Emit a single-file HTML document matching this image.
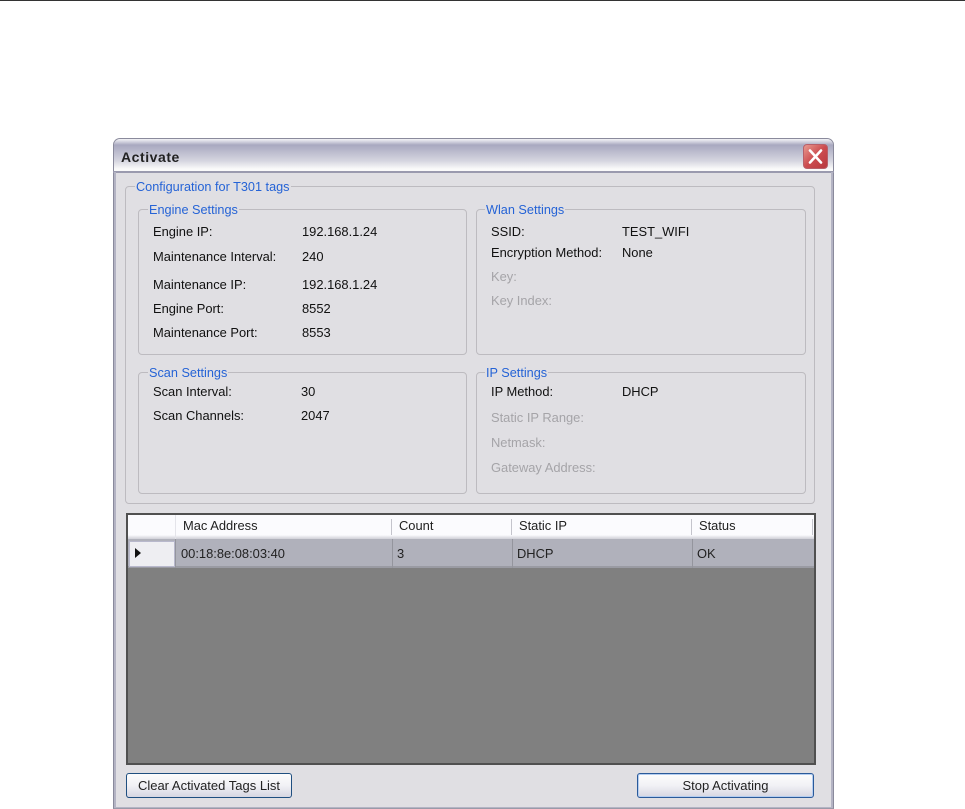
<!DOCTYPE html>
<html>
<head>
<meta charset="utf-8">
<style>
html,body{margin:0;padding:0;background:#fff;}
body{width:965px;height:809px;position:relative;overflow:hidden;font-family:"Liberation Sans",sans-serif;font-size:12.9px;color:#111;}
div,span{position:absolute;box-sizing:border-box;}
.t{white-space:nowrap;line-height:14px;height:14px;filter:blur(.3px);}
.d{color:#a5a4a8;}
.l{color:#2563d6;background:#e0dfe3;padding:0 1px;font-size:12.7px;}
.g{border:1px solid #bdbbc0;border-radius:4px;}
.btn{border:1px solid #1f4f80;border-radius:3px;background:linear-gradient(#fdfdfd,#f1f1f5 50%,#d6d6e2);text-align:center;line-height:24px;font-size:13px;color:#222;}
</style>
</head>
<body>
<div style="left:0;top:0;width:965px;height:1px;background:#333;"></div>

<!-- window -->
<div style="left:113px;top:138px;width:721px;height:671px;background:#e0dfe3;border:1px solid #8a8a9c;border-bottom-color:#9a9aa8;border-radius:7px 7px 0 0;"></div>
<div style="left:114px;top:139px;width:719px;height:33px;border-radius:6px 6px 0 0;background:linear-gradient(#f2f2f6 0,#dcdce6 2px,#a9a9c0 6px,#b4b4c8 10px,#d6d6e0 22px,#fafafa 30px);"></div>
<div style="left:113px;top:171px;width:721px;height:2px;background:#9a9aae;"></div>
<div style="left:114px;top:172px;width:2px;height:636px;background:#b4b4c4;"></div>
<div style="left:831px;top:172px;width:2px;height:636px;background:#b4b4c4;"></div>
<div style="left:114px;top:807px;width:719px;height:1px;background:#b4b4c4;"></div>
<div class="t" style="left:121px;top:150px;font-weight:bold;font-size:14px;color:#222;letter-spacing:.55px;">Activate</div>
<!-- close -->
<div style="left:803px;top:144px;width:25px;height:25px;border-radius:4px;border:1px solid #b8606a;background:linear-gradient(135deg,#e89a90,#cc4c50 50%,#b8383e);"></div>
<svg style="position:absolute;left:803px;top:144px;" width="25" height="25"><path d="M7 6.5L18 18.5M18 6.5L7 18.5" stroke="#fff" stroke-width="2.6" stroke-linecap="round"/></svg>

<!-- group boxes -->
<div class="g" style="left:125px;top:186px;width:690px;height:318px;"></div>
<div class="g" style="left:138px;top:209px;width:329px;height:146px;"></div>
<div class="g" style="left:476px;top:209px;width:330px;height:146px;"></div>
<div class="g" style="left:138px;top:372px;width:329px;height:122px;"></div>
<div class="g" style="left:476px;top:372px;width:330px;height:122px;"></div>

<div class="t l" style="left:135px;top:180px;">Configuration for T301 tags</div>
<div class="t l" style="left:148px;top:203px;">Engine Settings</div>
<div class="t l" style="left:485px;top:203px;">Wlan Settings</div>
<div class="t l" style="left:148px;top:366px;">Scan Settings</div>
<div class="t l" style="left:485px;top:366px;">IP Settings</div>

<div class="t" style="left:153px;top:225px;">Engine IP:</div>
<div class="t" style="left:302px;top:225px;">192.168.1.24</div>
<div class="t" style="left:153px;top:250px;">Maintenance Interval:</div>
<div class="t" style="left:302px;top:250px;">240</div>
<div class="t" style="left:153px;top:278px;">Maintenance IP:</div>
<div class="t" style="left:302px;top:278px;">192.168.1.24</div>
<div class="t" style="left:153px;top:302px;">Engine Port:</div>
<div class="t" style="left:302px;top:302px;">8552</div>
<div class="t" style="left:153px;top:326px;">Maintenance Port:</div>
<div class="t" style="left:302px;top:326px;">8553</div>

<div class="t" style="left:491px;top:225px;">SSID:</div>
<div class="t" style="left:622px;top:225px;">TEST_WIFI</div>
<div class="t" style="left:491px;top:246px;">Encryption Method:</div>
<div class="t" style="left:622px;top:246px;">None</div>
<div class="t d" style="left:491px;top:270px;">Key:</div>
<div class="t d" style="left:491px;top:294px;">Key Index:</div>

<div class="t" style="left:153px;top:385px;">Scan Interval:</div>
<div class="t" style="left:301px;top:385px;">30</div>
<div class="t" style="left:153px;top:409px;">Scan Channels:</div>
<div class="t" style="left:301px;top:409px;">2047</div>

<div class="t" style="left:491px;top:385px;">IP Method:</div>
<div class="t" style="left:622px;top:385px;">DHCP</div>
<div class="t d" style="left:491px;top:411px;">Static IP Range:</div>
<div class="t d" style="left:491px;top:436px;">Netmask:</div>
<div class="t d" style="left:491px;top:461px;">Gateway Address:</div>

<!-- grid -->
<div style="left:126px;top:513px;width:690px;height:252px;background:#808080;border:2px solid #505050;"></div>
<div style="left:128px;top:515px;width:686px;height:24px;background:linear-gradient(#fbfbfe 0,#fbfbfe 20px,#e4e4ea 22px,#d0d0d8);"></div>
<div style="left:175px;top:515px;width:1px;height:24px;background:#e4e4ea;"></div>
<div style="left:391px;top:519px;width:1px;height:16px;background:#c4c4cc;"></div>
<div style="left:511px;top:519px;width:1px;height:16px;background:#c4c4cc;"></div>
<div style="left:691px;top:519px;width:1px;height:16px;background:#c4c4cc;"></div>
<div style="left:812px;top:519px;width:1px;height:16px;background:#c4c4cc;"></div>

<div style="left:128px;top:539px;width:686px;height:29px;background:#b0b1bb;"></div>
<div style="left:128px;top:566px;width:686px;height:2px;background:#9a9ba3;"></div>
<div style="left:129px;top:541px;width:46px;height:26px;background:#eeeef2;border:1px solid #b8b8cc;"></div>
<div style="left:175px;top:539px;width:1px;height:29px;background:#94959d;"></div>
<div style="left:392px;top:539px;width:1px;height:29px;background:#94959d;"></div>
<div style="left:512px;top:539px;width:1px;height:29px;background:#94959d;"></div>
<div style="left:692px;top:539px;width:1px;height:29px;background:#94959d;"></div>
<svg style="position:absolute;left:134px;top:547px;" width="8" height="12"><path d="M1 1L7 6L1 11Z" fill="#111"/></svg>

<div class="t" style="left:183px;top:519px;color:#222;">Mac Address</div>
<div class="t" style="left:399px;top:519px;color:#222;">Count</div>
<div class="t" style="left:519px;top:519px;color:#222;">Static IP</div>
<div class="t" style="left:699px;top:519px;color:#222;">Status</div>
<div class="t" style="left:181px;top:547px;color:#222;">00:18:8e:08:03:40</div>
<div class="t" style="left:397px;top:547px;color:#222;">3</div>
<div class="t" style="left:517px;top:547px;color:#222;">DHCP</div>
<div class="t" style="left:697px;top:547px;color:#222;">OK</div>

<!-- buttons -->
<div class="btn" style="left:126px;top:773px;width:166px;height:25px;">Clear Activated Tags List</div>
<div class="btn" style="left:637px;top:773px;width:177px;height:25px;border-color:#2a5a9a;box-shadow:inset 0 0 0 1px #b4cdf0;">Stop Activating</div>
</body>
</html>
